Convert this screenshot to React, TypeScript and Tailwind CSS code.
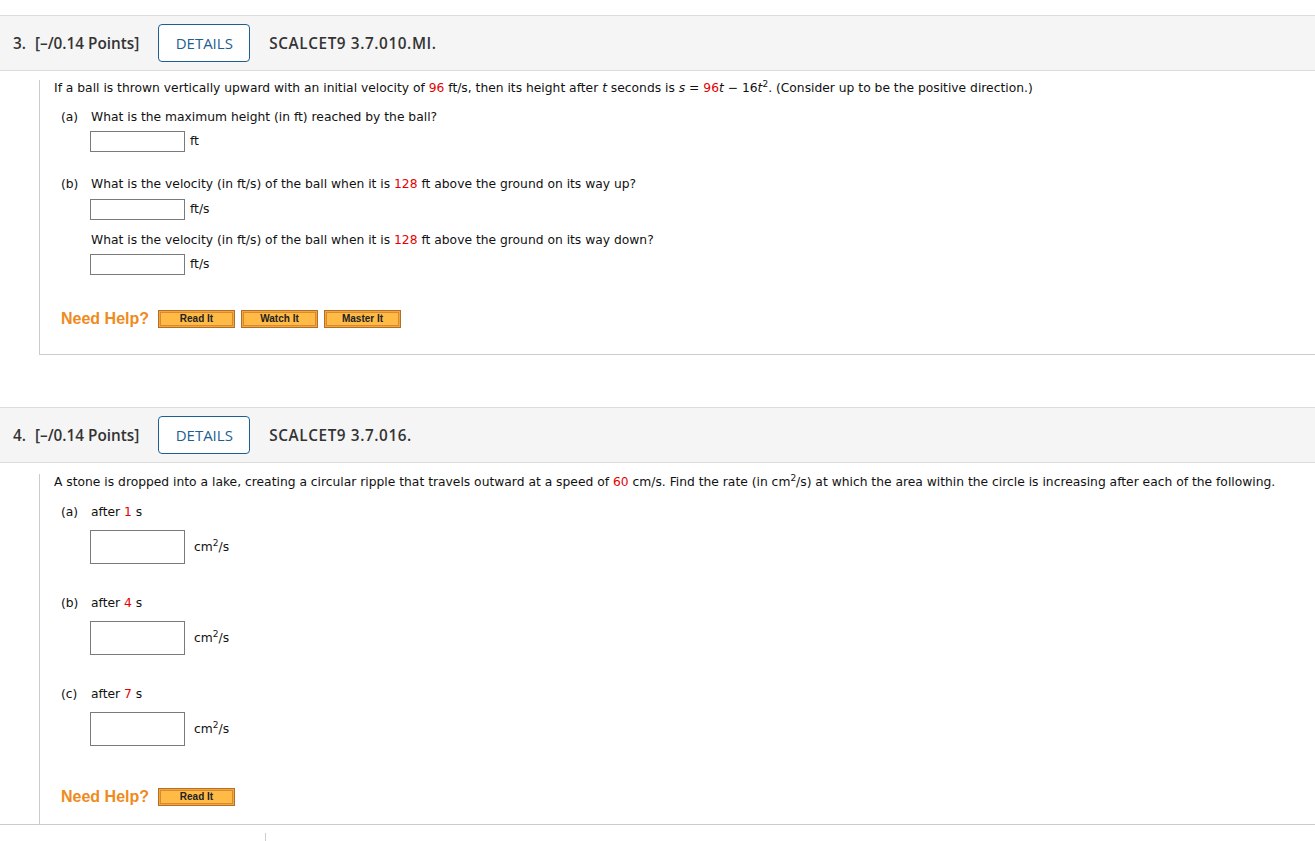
import React from "react";

const body = "font-['DejaVu_Sans',Verdana,sans-serif] text-[12.3px] text-[#111]";
const head = "font-['Open_Sans',sans-serif] text-[15.3px] font-semibold text-[#333]";

function Red({ children }: { children: React.ReactNode }) {
  return <span className="text-[#e60000]">{children}</span>;
}

function Header({ num, code }: { num: string; code: string }) {
  return (
    <div className="flex h-[56px] items-center border-y border-[#dcdcdc] bg-[#f5f5f5] pl-[13px]">
      <span className={head}>{num}.</span>
      <span className={`${head} ml-[9px]`}>[–/0.14 Points]</span>
      <div className="ml-[19px] flex h-[38px] w-[92px] items-center justify-center rounded-[4px] border border-[#1d5f91] bg-white">
        <span className="font-['Open_Sans',sans-serif] text-[15px] text-[#1d5f91]">DETAILS</span>
      </div>
      <span className={`${head} ml-[19px] font-bold tracking-[0.6px]`}>{code}</span>
    </div>
  );
}

function HelpButton({ label }: { label: string }) {
  return (
    <div className="h-[18px] w-[77px] border border-[#b0702c] bg-[#f6a53b] p-px">
      <div className="flex h-full items-center justify-center border border-[#d98a2e] bg-[#ffbb45]">
        <span className="font-['Liberation_Sans',Arial,sans-serif] text-[10px] font-bold leading-none text-[#222]">
          {label}
        </span>
      </div>
    </div>
  );
}

function NeedHelp({ buttons, mt }: { buttons: string[]; mt: string }) {
  return (
    <div className={`flex h-[18px] items-center pl-[7px] ${mt}`}>
      <span className="w-[97px] font-['Liberation_Sans',Arial,sans-serif] text-[16px] font-bold text-[#f08a1c]">
        Need Help?
      </span>
      <div className="flex gap-[6px]">
        {buttons.map((b) => (
          <HelpButton key={b} label={b} />
        ))}
      </div>
    </div>
  );
}

function Answer({ h, unit, gap, mt }: { h: string; unit: React.ReactNode; gap: string; mt: string }) {
  return (
    <div className={`flex items-center pl-[36px] ${mt}`}>
      <div className={`w-[95px] ${h} border border-[#7a7a7a] bg-white`} />
      <span className={`${body} ${gap}`}>{unit}</span>
    </div>
  );
}

function Part({ tag, children, mt }: { tag?: string; children: React.ReactNode; mt: string }) {
  return (
    <div className={`flex h-[16px] items-center pl-[7px] ${body} ${mt}`}>
      <span className="w-[30px]">{tag}</span>
      <span>{children}</span>
    </div>
  );
}

const cm2 = (
  <>
    cm<sup className="text-[9px]">2</sup>/s
  </>
);

export default function App() {
  return (
    <div className="min-h-[841px] bg-white pt-[15px]">
      {/* Question 3 */}
      <Header num="3" code="SCALCET9 3.7.010.MI." />
      <div className="ml-[39px] border-b border-l border-[#cccccc] pb-[26px] pl-[14px]">
        <div className={`flex h-[16px] items-center mt-[9px] ${body}`}>
          <span>
            If a ball is thrown vertically upward with an initial velocity of <Red>96</Red> ft/s, then its height
            after <i>t</i> seconds is <i>s</i> = <Red>96</Red>
            <i>t</i> − 16<i>t</i>
            <sup className="text-[9px]">2</sup>. (Consider up to be the positive direction.)
          </span>
        </div>
        <Part tag="(a)" mt="mt-[13px]">What is the maximum height (in ft) reached by the ball?</Part>
        <Answer h="h-[21px]" unit="ft" gap="ml-[5px]" mt="mt-[6px]" />
        <Part tag="(b)" mt="mt-[24px]">
          What is the velocity (in ft/s) of the ball when it is <Red>128</Red> ft above the ground on its way up?
        </Part>
        <Answer h="h-[21px]" unit="ft/s" gap="ml-[5px]" mt="mt-[7px]" />
        <Part mt="mt-[12px]">
          What is the velocity (in ft/s) of the ball when it is <Red>128</Red> ft above the ground on its way down?
        </Part>
        <Answer h="h-[21px]" unit="ft/s" gap="ml-[5px]" mt="mt-[6px]" />
        <NeedHelp buttons={["Read It", "Watch It", "Master It"]} mt="mt-[35px]" />
      </div>

      {/* Question 4 */}
      <div className="mt-[52px]">
        <Header num="4" code="SCALCET9 3.7.016." />
        <div className="border-b border-[#cccccc]">
          <div className="ml-[39px] border-l border-[#cccccc] pb-[18px] pl-[14px]">
            <div className={`flex h-[16px] items-center mt-[11px] ${body}`}>
              <span>
                A stone is dropped into a lake, creating a circular ripple that travels outward at a speed of{" "}
                <Red>60</Red> cm/s. Find the rate (in cm<sup className="text-[9px]">2</sup>/s) at which the area
                within the circle is increasing after each of the following.
              </span>
            </div>
            <Part tag="(a)" mt="mt-[14px]">
              after <Red>1</Red> s
            </Part>
            <Answer h="h-[34px]" unit={cm2} gap="ml-[9px]" mt="mt-[10px]" />
            <Part tag="(b)" mt="mt-[31px]">
              after <Red>4</Red> s
            </Part>
            <Answer h="h-[34px]" unit={cm2} gap="ml-[9px]" mt="mt-[10px]" />
            <Part tag="(c)" mt="mt-[31px]">
              after <Red>7</Red> s
            </Part>
            <Answer h="h-[34px]" unit={cm2} gap="ml-[9px]" mt="mt-[10px]" />
            <NeedHelp buttons={["Read It"]} mt="mt-[42px]" />
          </div>
        </div>
        <div className="ml-[265px] mt-[8px] h-[8px] w-px bg-[#cccccc]" />
      </div>
    </div>
  );
}
